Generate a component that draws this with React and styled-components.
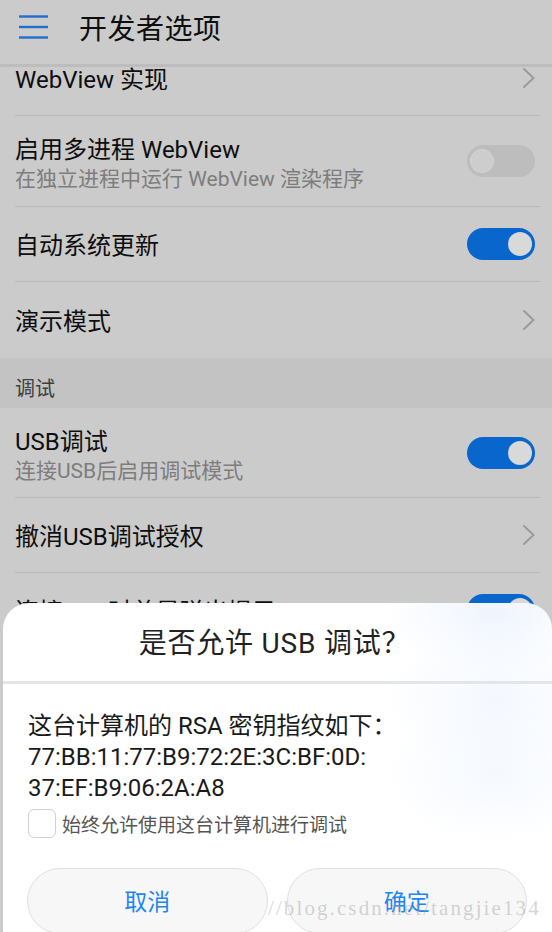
import React from "react";
import styled, { createGlobalStyle } from "styled-components";

const GlobalStyle = createGlobalStyle`
  html, body { margin: 0; padding: 0; background: #cbcbcb; }
  #root { width: 552px; height: 932px; }
  * { box-sizing: border-box; }
`;

const FONT = `Roboto, "Noto Sans CJK SC", "Noto Sans", sans-serif`;

const Screen = styled.div`
  position: relative;
  width: 552px;
  height: 932px;
  overflow: hidden;
  background: #cbcbcb;
  font-family: ${FONT};
  display: flex;
  flex-direction: column;
`;

const Header = styled.header`
  position: relative;
  z-index: 2;
  flex: 0 0 auto;
  height: 67px;
  display: flex;
  align-items: center;
  gap: 31px;
  padding: 0 0 10px 19px;
  background: #cbcbcb;
  border-bottom: 3px solid #bdbdbd;
`;

const HeaderTitle = styled.h1`
  margin: 0;
  font-size: 28px;
  font-weight: 400;
  color: #0e0e0e;
  letter-spacing: 0.5px;
`;

const ScrollArea = styled.div`
  flex: 1 1 auto;
  overflow: hidden;
`;

const List = styled.div`
  margin-top: -26px;
  display: flex;
  flex-direction: column;
`;

const Row = styled.div`
  height: ${(p) => p.$h}px;
  margin: 0 12px 0 15px;
  padding-right: 5px;
  display: flex;
  align-items: center;
  justify-content: space-between;
  border-bottom: ${(p) => (p.$last ? "none" : "1px solid #b9b9b9")};
`;

const TextCol = styled.div`
  display: flex;
  flex-direction: column;
  padding-top: ${(p) => (p.$two ? 6 : 4)}px;
`;

const Title = styled.div`
  font-size: 24px;
  line-height: 30px;
  color: #0e0e0e;
`;

const Sub = styled.div`
  font-size: 21px;
  line-height: 28px;
  color: #7d7d7d;
`;

const Section = styled.div`
  height: 50px;
  background: #c3c3c3;
  display: flex;
  align-items: flex-end;
  padding: 0 0 5px 15px;
  font-size: 20px;
  line-height: 28px;
  color: #3e3e3e;
`;

const Track = styled.span`
  width: 68px;
  height: 32px;
  border-radius: 16px;
  display: flex;
  align-items: center;
  justify-content: ${(p) => (p.$on ? "flex-end" : "flex-start")};
  padding: 0 3px;
  background: ${(p) => (p.$on ? "#0866cc" : "#bdbdbd")};
  flex: 0 0 auto;
`;

const Knob = styled.span`
  width: 24px;
  height: 24px;
  border-radius: 50%;
  background: ${(p) => (p.$on ? "#d9d9d9" : "#cdcdcd")};
  border: ${(p) => (p.$on ? "none" : "1px solid #d5d5d5")};
`;

const Toggle = ({ on }) => (
  <Track $on={on}>
    <Knob $on={on} />
  </Track>
);

const Chevron = () => (
  <svg width="14" height="22" viewBox="0 0 14 22" style={{ marginRight: -1 }}>
    <polyline
      points="2,2 11.5,11 2,20"
      fill="none"
      stroke="#9b9b9b"
      strokeWidth="2"
      strokeLinecap="round"
      strokeLinejoin="round"
    />
  </svg>
);

const Hamburger = () => (
  <svg width="29" height="24" viewBox="0 0 29 24">
    <g stroke="#1e6fd4" strokeWidth="2.4">
      <line x1="0" y1="1.5" x2="29" y2="1.5" />
      <line x1="0" y1="12" x2="29" y2="12" />
      <line x1="0" y1="22.5" x2="29" y2="22.5" />
    </g>
  </svg>
);

/* ---------- dialog (overlay) ---------- */

const Dialog = styled.div`
  position: absolute;
  left: 3px;
  right: 0;
  bottom: 0;
  height: 329px;
  z-index: 5;
  border-radius: 26px 26px 0 0;
  overflow: hidden;
  background:
    radial-gradient(ellipse 110px 60px at 492px 10px, rgba(226, 236, 252, 0.55), rgba(226, 236, 252, 0) 100%),
    radial-gradient(ellipse 110px 70px at 492px 95px, rgba(232, 240, 253, 0.5), rgba(232, 240, 253, 0) 100%),
    radial-gradient(ellipse 110px 70px at 492px 170px, rgba(234, 242, 253, 0.5), rgba(234, 242, 253, 0) 100%),
    #ffffff;
  display: flex;
  flex-direction: column;
`;

const DialogTitle = styled.div`
  height: 81px;
  flex: 0 0 auto;
  display: flex;
  align-items: center;
  justify-content: center;
  padding: 0 6px 3px 0;
  font-size: 28px;
  letter-spacing: 0.8px;
  color: #222222;
  border-bottom: 3px solid #e4e5e8;
`;

const DialogBody = styled.div`
  padding: 27px 25px 0 25px;
  display: flex;
  flex-direction: column;
`;

const Message = styled.div`
  font-size: 24px;
  line-height: 31px;
  color: #1a1a1a;
`;

const CheckRow = styled.label`
  margin-top: 4px;
  height: 30px;
  display: flex;
  align-items: center;
  gap: 6px;
`;

const CheckBox = styled.span`
  width: 28px;
  height: 29px;
  border: 1.5px solid #d0d0d0;
  border-radius: 6px;
  background: #fff;
  flex: 0 0 auto;
`;

const CheckLabel = styled.span`
  font-size: 19px;
  color: #555555;
`;

const Buttons = styled.div`
  margin: 30px 0 0 -1px;
  display: grid;
  grid-template-columns: 1fr 1fr;
  gap: 19px;
`;

const Button = styled.button`
  height: 66px;
  border-radius: 33px;
  border: 1px solid #e0e0e0;
  background: #f7f7f7;
  color: #1f86f0;
  font-family: ${FONT};
  font-size: 23px;
  padding: 0;
  padding-bottom: 2px;
`;

const Watermark = styled.div`
  position: absolute;
  left: 268px;
  top: 896px;
  z-index: 6;
  font-family: "Liberation Serif", serif;
  font-size: 21px;
  letter-spacing: 2.1px;
  color: rgba(160, 160, 160, 0.45);
  white-space: nowrap;
  pointer-events: none;
`;

export default function App() {
  return (
    <>
      <GlobalStyle />
      <Screen>
        <Header>
          <Hamburger />
          <HeaderTitle>开发者选项</HeaderTitle>
        </Header>
        <ScrollArea>
          <List>
            <Row $h={75}>
              <TextCol>
                <Title>WebView 实现</Title>
              </TextCol>
              <Chevron />
            </Row>
            <Row $h={91}>
              <TextCol $two>
                <Title>启用多进程 WebView</Title>
                <Sub>在独立进程中运行 WebView 渲染程序</Sub>
              </TextCol>
              <Toggle on={false} />
            </Row>
            <Row $h={75}>
              <TextCol>
                <Title>自动系统更新</Title>
              </TextCol>
              <Toggle on />
            </Row>
            <Row $h={76} $last>
              <TextCol>
                <Title>演示模式</Title>
              </TextCol>
              <Chevron />
            </Row>
            <Section>调试</Section>
            <Row $h={90}>
              <TextCol $two>
                <Title>USB调试</Title>
                <Sub>连接USB后启用调试模式</Sub>
              </TextCol>
              <Toggle on />
            </Row>
            <Row $h={75}>
              <TextCol>
                <Title>撤消USB调试授权</Title>
              </TextCol>
              <Chevron />
            </Row>
            <Row $h={75}>
              <TextCol>
                <Title>连接USB时总是弹出提示</Title>
              </TextCol>
              <Toggle on />
            </Row>
          </List>
        </ScrollArea>

        <Dialog role="dialog">
          <DialogTitle>是否允许 USB 调试？</DialogTitle>
          <DialogBody>
            <Message>
              这台计算机的 RSA 密钥指纹如下：
              <br />
              77:BB:11:77:B9:72:2E:3C:BF:0D:
              <br />
              37:EF:B9:06:2A:A8
            </Message>
            <CheckRow>
              <CheckBox />
              <CheckLabel>始终允许使用这台计算机进行调试</CheckLabel>
            </CheckRow>
            <Buttons>
              <Button>取消</Button>
              <Button>确定</Button>
            </Buttons>
          </DialogBody>
        </Dialog>
        <Watermark>//blog.csdn.net/tangjie134</Watermark>
      </Screen>
    </>
  );
}
